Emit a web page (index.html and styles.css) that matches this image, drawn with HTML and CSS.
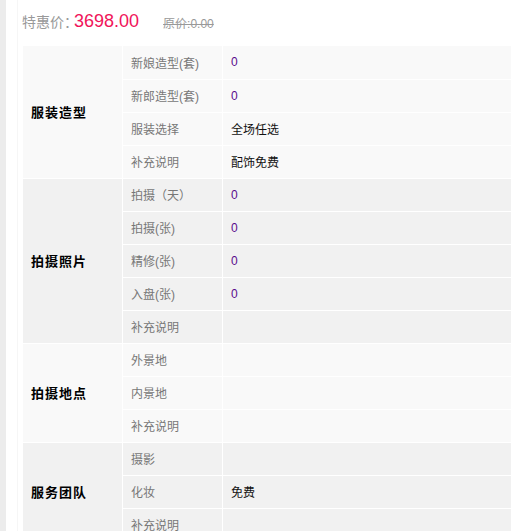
FILE: index.html
```html
<!DOCTYPE html>
<html lang="zh-CN">
<head>
<meta charset="utf-8">
<title>套餐详情</title>
<link rel="stylesheet" href="styles.css">
</head>
<body>
<div class="page">
  <div class="strip"></div>
  <div class="content">
    <div class="price-line">
      <span class="price-label">特惠价：</span><span class="price">3698.00</span><span class="orig">原价:0.00</span>
    </div>
    <table class="spec">
      <tbody class="light">
        <tr><th rowspan="4">服装造型</th><td class="k">新娘造型(套)</td><td class="v num">0</td></tr>
        <tr><td class="k">新郎造型(套)</td><td class="v num">0</td></tr>
        <tr><td class="k">服装选择</td><td class="v">全场任选</td></tr>
        <tr><td class="k">补充说明</td><td class="v">配饰免费</td></tr>
      </tbody>
      <tbody class="dark">
        <tr><th rowspan="5">拍摄照片</th><td class="k">拍摄（天）</td><td class="v num">0</td></tr>
        <tr><td class="k">拍摄(张)</td><td class="v num">0</td></tr>
        <tr><td class="k">精修(张)</td><td class="v num">0</td></tr>
        <tr><td class="k">入盘(张)</td><td class="v num">0</td></tr>
        <tr><td class="k">补充说明</td><td class="v"></td></tr>
      </tbody>
      <tbody class="light">
        <tr><th rowspan="3">拍摄地点</th><td class="k">外景地</td><td class="v"></td></tr>
        <tr><td class="k">内景地</td><td class="v"></td></tr>
        <tr><td class="k">补充说明</td><td class="v"></td></tr>
      </tbody>
      <tbody class="dark">
        <tr><th rowspan="3">服务团队</th><td class="k">摄影</td><td class="v"></td></tr>
        <tr><td class="k">化妆</td><td class="v">免费</td></tr>
        <tr><td class="k">补充说明</td><td class="v"></td></tr>
      </tbody>
    </table>
  </div>
</div>
</body>
</html>
```

FILE: styles.css
```css
html, body {
  margin: 0;
  padding: 0;
  overflow: hidden;
  background: #fff;
}
body {
  font-family: "Liberation Sans", "Noto Sans CJK SC", sans-serif;
  font-size: 12px;
  color: #333;
}
.page {
  display: flex;
  height: 531px;
  overflow: hidden;
}
.strip {
  width: 6px;
  flex: none;
  background: #ececec;
}
.content {
  margin-left: 11px;
  border-left: 1px solid #f6f6f6;
  padding-left: 4px;
  flex: 1;
  min-width: 0;
}
.price-line {
  height: 46px;
  display: flex;
  align-items: center;
  padding-bottom: 4px;
  box-sizing: border-box;
}
.price-label {
  font-size: 14px;
  color: #999;
}
.price {
  font-size: 18px;
  color: #f0145a;
  margin-left: -4px;
}
.orig {
  font-size: 12px;
  color: #999;
  text-decoration: line-through;
  margin-left: 24px;
  margin-top: 2px;
}
.spec {
  border-collapse: collapse;
  width: 100%;
  table-layout: fixed;
}
.spec th, .spec td {
  border: 1px solid #fff;
  height: 33px;
  padding: 0 8px;
  box-sizing: border-box;
  vertical-align: middle;
  text-align: left;
  white-space: nowrap;
  border-top: none;
}
.spec tr + tr td, .spec tbody + tbody th, .spec tbody + tbody td {
  border-top: 1px solid #fff;
}
.spec th {
  width: 100px;
  font-size: 13px;
  font-weight: bold;
  color: #000;
  letter-spacing: 1px;
  padding-left: 8px;
}
.spec td.k {
  width: 100px;
  color: #777;
}
.spec td.v {
  color: #111;
  border-right: none;
}
.spec td.num {
  color: #5a0a8c;
}
.light th, .light td {
  background: #f9f9f9;
}
.dark th, .dark td {
  background: #f1f1f1;
}
```
